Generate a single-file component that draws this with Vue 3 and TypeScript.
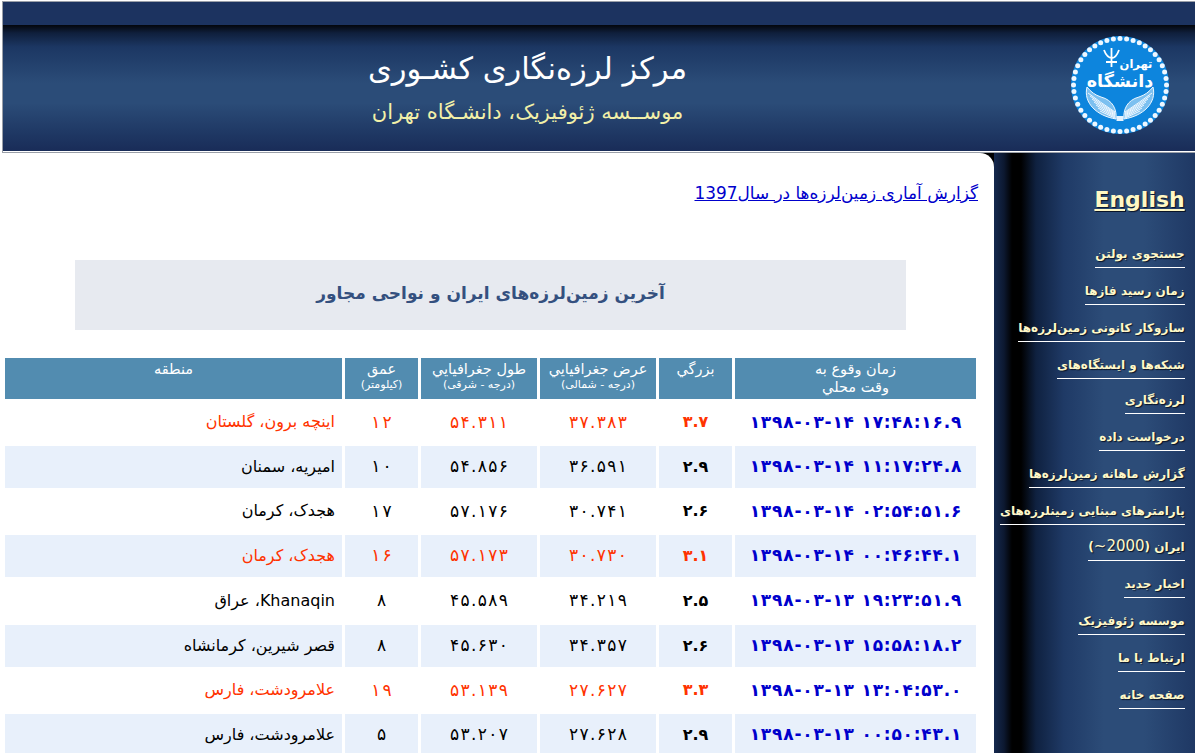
<script setup lang="ts">
interface Quake { time: string; mag: string; lat: string; lon: string; depth: string; region: string; hot: boolean }
const quakes: Quake[] = [
  { time: '۱۳۹۸-۰۳-۱۴ ۱۷:۴۸:۱۶.۹', mag: '۳.۷', lat: '۳۷.۳۸۳', lon: '۵۴.۳۱۱', depth: '۱۲', region: 'اینچه برون، گلستان', hot: true },
  { time: '۱۳۹۸-۰۳-۱۴ ۱۱:۱۷:۲۴.۸', mag: '۲.۹', lat: '۳۶.۵۹۱', lon: '۵۴.۸۵۶', depth: '۱۰', region: 'امیریه، سمنان', hot: false },
  { time: '۱۳۹۸-۰۳-۱۴ ۰۲:۵۴:۵۱.۶', mag: '۲.۶', lat: '۳۰.۷۴۱', lon: '۵۷.۱۷۶', depth: '۱۷', region: 'هجدک، کرمان', hot: false },
  { time: '۱۳۹۸-۰۳-۱۴ ۰۰:۴۶:۴۴.۱', mag: '۳.۱', lat: '۳۰.۷۳۰', lon: '۵۷.۱۷۳', depth: '۱۶', region: 'هجدک، کرمان', hot: true },
  { time: '۱۳۹۸-۰۳-۱۳ ۱۹:۲۳:۵۱.۹', mag: '۲.۵', lat: '۳۴.۲۱۹', lon: '۴۵.۵۸۹', depth: '۸', region: 'Khanaqin، عراق', hot: false },
  { time: '۱۳۹۸-۰۳-۱۳ ۱۵:۵۸:۱۸.۲', mag: '۲.۶', lat: '۳۴.۳۵۷', lon: '۴۵.۶۳۰', depth: '۸', region: 'قصر شیرین، کرمانشاه', hot: false },
  { time: '۱۳۹۸-۰۳-۱۳ ۱۳:۰۴:۵۳.۰', mag: '۳.۳', lat: '۲۷.۶۲۷', lon: '۵۳.۱۳۹', depth: '۱۹', region: 'علامرودشت، فارس', hot: true },
  { time: '۱۳۹۸-۰۳-۱۳ ۰۰:۵۰:۴۳.۱', mag: '۲.۹', lat: '۲۷.۶۲۸', lon: '۵۳.۲۰۷', depth: '۵', region: 'علامرودشت، فارس', hot: false },
]
const chars = (s: string): string[] => Array.from(s)
const navTop = ['جستجوی بولتن', 'زمان رسید فازها', 'سازوکار کانونی زمین‌لرزه‌ها']
const navMid = ['درخواست داده', 'گزارش ماهانه زمین‌لرزه‌ها']
const navEnd = ['اخبار جدید', 'موسسه ژئوفیزیک', 'ارتباط با ما', 'صفحه خانه']
const pearls = Array.from({ length: 44 }, (_, i) => {
  const a = (i / 44) * Math.PI * 2
  return { x: 50 + 46.5 * Math.cos(a), y: 50 + 46.5 * Math.sin(a) }
})
const feathers = Array.from({ length: 7 }, (_, i) => i)
</script>

<template>
  <div class="page">
    <header class="top">
      <div class="top-strip"></div>
      <div class="top-body">
        <div class="titles">
          <h1>مرکز لرزه‌نگاری کشـوری</h1>
          <p>موســسه ژئوفیزیک، دانشـگاه تهران</p>
        </div>
        <svg class="logo" viewBox="0 0 100 100" width="100" height="100" role="img" aria-label="دانشگاه تهران">
          <circle cx="50" cy="50" r="49" fill="#0d85dd" />
          <circle v-for="(p, i) in pearls" :key="i" :cx="p.x" :cy="p.y" r="2.5" fill="#eef7ff" />
          <path d="M34 15 q3 8 8 8 q4 0 7-8 M41.5 13v19 M36 27h11" fill="none" stroke="#fff" stroke-width="1.8" />
          <text x="66" y="33" class="logo-t" font-size="11.5">تهران</text>
          <text x="50" y="52" class="logo-t" font-size="17.5">دانشگاه</text>
          <g fill="none" stroke="#f0f8ff" stroke-width="1">
            <path d="M17 52 C13 68 27 81 46 84 C47 75 43 65 31 62 C25 60 21 57 17 52Z" fill="#7cc0f0" />
            <path d="M83 52 C87 68 73 81 54 84 C53 75 57 65 69 62 C75 60 79 57 83 52Z" fill="#7cc0f0" />
            <path v-for="f in feathers" :key="'l' + f" :d="`M${18 + f * 2} ${58 + f * 3} Q${30 + f} ${67 + f * 2} 45 ${77 + f}`" />
            <path v-for="f in feathers" :key="'r' + f" :d="`M${82 - f * 2} ${58 + f * 3} Q${70 - f} ${67 + f * 2} 55 ${77 + f}`" />
          </g>
          <rect x="46.5" y="81" width="7" height="5" fill="#e4f3ff" />
        </svg>
      </div>
    </header>

    <div class="columns">
      <div class="main-back">
        <main class="main">
          <div class="report"><a href="#">گزارش آماری زمین‌لرزه‌ها در سال1397</a></div>
          <h2 class="banner">آخرین زمین‌لرزه‌های ایران و نواحی مجاور</h2>
          <table class="quakes" dir="rtl">
            <colgroup>
              <col class="c-time" /><col class="c-mag" /><col class="c-geo" /><col class="c-geo" /><col class="c-mag" /><col />
            </colgroup>
            <thead>
              <tr>
                <th>زمان وقوع به<br />وقت محلي</th>
                <th>بزرگي</th>
                <th>عرض جغرافيايي<small>(درجه - شمالی)</small></th>
                <th>طول جغرافيايي<small>(درجه - شرقی)</small></th>
                <th>عمق<small>(کیلومتر)</small></th>
                <th>منطقه</th>
              </tr>
            </thead>
            <tbody>
              <tr v-for="(q, i) in quakes" :key="i" :class="{ hot: q.hot, alt: i % 2 === 1 }">
                <td class="time" dir="ltr"><span v-for="(c, k) in chars(q.time)" :key="k" class="ch">{{ c }}</span></td>
                <td class="mag" dir="ltr"><span v-for="(c, k) in chars(q.mag)" :key="k" class="ch">{{ c }}</span></td>
                <td class="num" dir="ltr"><span v-for="(c, k) in chars(q.lat)" :key="k" class="ch">{{ c }}</span></td>
                <td class="num" dir="ltr"><span v-for="(c, k) in chars(q.lon)" :key="k" class="ch">{{ c }}</span></td>
                <td class="depth" dir="ltr"><span v-for="(c, k) in chars(q.depth)" :key="k" class="ch">{{ c }}</span></td>
                <td class="region">{{ q.region }}</td>
              </tr>
            </tbody>
          </table>
        </main>
      </div>

      <nav class="side" dir="rtl">
        <div class="lang"><a href="#" dir="ltr">English</a></div>
        <div v-for="n in navTop" :key="n" class="item"><a href="#">{{ n }}</a></div>
        <div class="item wrap"><a href="#">شبکه‌ها و ایستگاه‌های<br />لرزه‌نگاری</a></div>
        <div v-for="n in navMid" :key="n" class="item"><a href="#">{{ n }}</a></div>
        <div class="item wrap"><a href="#">پارامترهای مبنایی زمینلرزه‌های<br />ایران (<bdi dir="ltr" class="thin">~2000</bdi>)</a></div>
        <div v-for="n in navEnd" :key="n" class="item"><a href="#">{{ n }}</a></div>
      </nav>
    </div>
  </div>
</template>

<style>
html, body { margin: 0; overflow: hidden; background: #fff; }
</style>

<style scoped>
.page {
  height: 753px;
  overflow: hidden;
  font-family: Tahoma, "DejaVu Sans", sans-serif;
}
.top {
  box-sizing: border-box;
  height: 152px;
  margin: 1px 0 0 2px;
  border: 1px solid #9a9fa8;
  border-right: 0;
}
.top-strip {
  height: 23px;
  background: #1c3360;
}
.top-body {
  height: 126px;
  display: flex;
  align-items: center;
  padding-left: 210px;
  padding-right: 25px;
  background: linear-gradient(#03060c 0, #0f1f3c 8px, #1c3763 22px, #2b4c78 58px, #2b4c78 78px, #1f3864 108px, #192c58 126px);
}
.logo { flex: none; margin-top: -7px; }
.titles {
  flex: 1;
  direction: rtl;
  text-align: center;
  padding-right: 228px;
  margin-top: 1px;
}
h1 {
  margin: 0;
  font-weight: normal;
  font-size: 30.5px;
  line-height: 44px;
  color: #fff;
  white-space: nowrap;
}
.titles p {
  margin: 2px 0 0;
  font-size: 21px;
  line-height: 38px;
  color: #f2f0a8;
  white-space: nowrap;
}
.logo-t {
  font-family: "DejaVu Sans", sans-serif;
  font-weight: bold;
  fill: #fff;
  text-anchor: middle;
}
.columns {
  display: flex;
  height: 600px;
}
.main-back {
  width: 994px;
  flex: none;
  background: #000;
}
.main {
  box-sizing: border-box;
  height: 100%;
  padding: 27px 0 0 2px;
  background: #fff;
  border-top-right-radius: 14px;
}
.report {
  direction: rtl;
  height: 80px;
  padding-right: 16px;
  font-size: 16.9px;
  line-height: 26px;
  white-space: nowrap;
}
.report a { color: #0000cc; }
.banner {
  box-sizing: border-box;
  width: 831px;
  height: 70px;
  margin: 0 0 25px 73px;
  background: #e7eaf0;
  color: #34507f;
  font-size: 17px;
  line-height: 66px;
  text-align: center;
  direction: rtl;
}
.quakes {
  table-layout: fixed;
  width: 977px;
  border-collapse: separate;
  border-spacing: 3px;
}
.c-time { width: 241px; }
.c-mag { width: 73px; }
.c-geo { width: 116px; }
th {
  height: 41px;
  padding: 2px 2px 0;
  box-sizing: border-box;
  background: #528cb0;
  color: #fff;
  font-weight: normal;
  font-size: 14.5px;
  line-height: 18px;
  vertical-align: top;
  text-align: center;
  white-space: nowrap;
}
th small {
  display: block;
  font-size: 11px;
  line-height: 14px;
}
td {
  box-sizing: border-box;
  height: 42px;
  padding: 0 0 2px;
  text-align: center;
  font-size: 16px;
  color: #000;
  white-space: nowrap;
}
tbody tr:nth-child(odd) td { height: 41px; }
tbody tr:nth-child(5) td { height: 42px; }
.alt td { background: #e8f0fb; }
.hot td { color: #ff3300; }
.ch {
  display: inline-block;
  white-space: pre;
}
td.num { font-size: 17px; }
td.num .ch { padding: 0 0.7px; }
td.depth { font-size: 17px; }
td.depth .ch { padding: 0 1px; }
.mag { font-weight: bold; }
td.time {
  color: #0000cc;
  font-weight: bold;
  font-size: 17px;
}
td.time .ch { padding: 0 0.4px; }
.region {
  text-align: right;
  padding-right: 7px;
}
.side {
  box-sizing: border-box;
  flex: 1;
  padding: 28px 12px 0 6px;
  background: linear-gradient(90deg, #15294f 0, #0c1830 10px, #000 18px, #000 27px, #0f2140 42px, #1f3a66 70px, #2c4c78 110px, #2c4c78 150px, #1f3864 201px);
  text-align: right;
}
.lang {
  height: 55px;
  line-height: 38px;
}
.lang a {
  font-weight: bold;
  font-size: 22px;
  color: #fff8c4;
  text-shadow: 1px 1px 1px #0a1428;
}
.item {
  line-height: 37px;
  font-size: 12px;
  font-weight: bold;
  white-space: nowrap;
}
.item.wrap {
  line-height: 35px;
  padding: 1px 0;
}
.item a {
  color: #fff8c8;
  text-decoration: none;
  border-bottom: 1px solid #fff;
  padding-bottom: 6px;
  text-shadow: 1px 1px 1px #0a1428;
}
.thin { font-weight: normal; font-size: 15px; }
</style>
